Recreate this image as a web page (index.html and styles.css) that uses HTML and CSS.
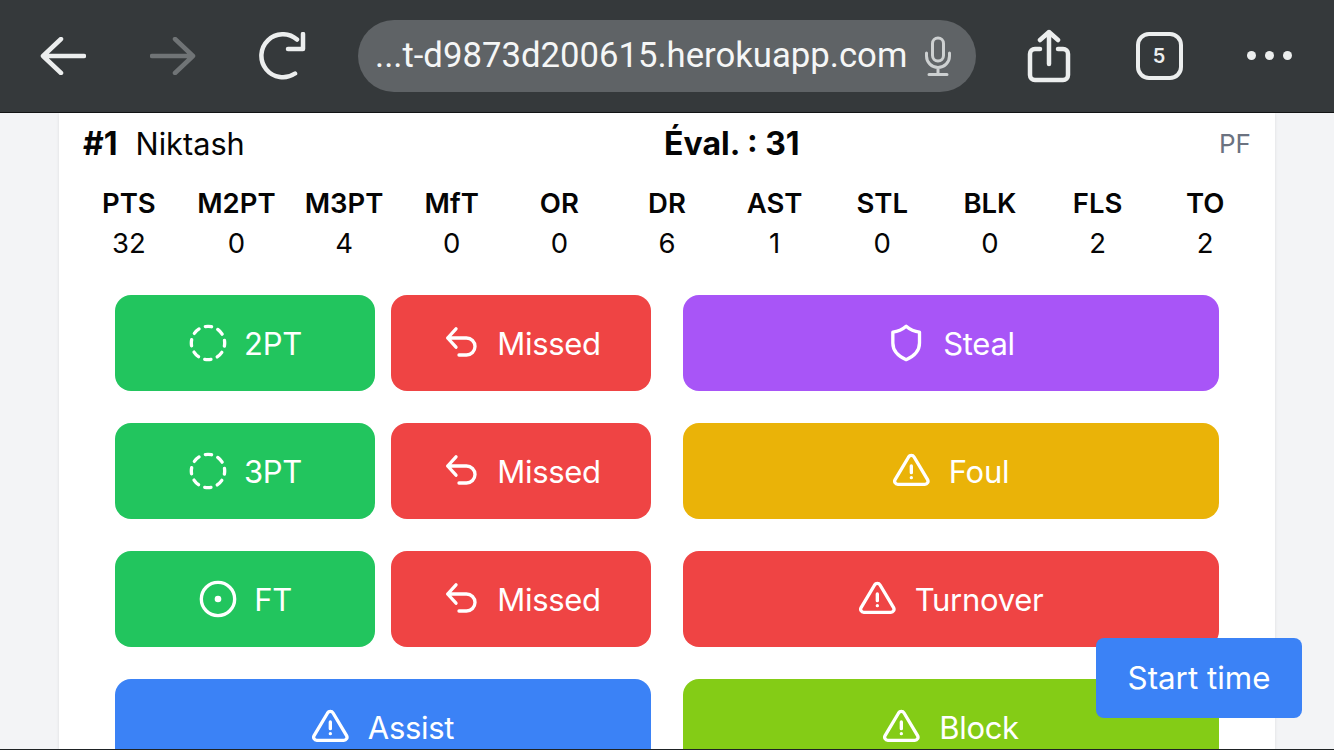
FILE: index.html
```html
<!DOCTYPE html>
<html lang="fr">
<head>
  <meta charset="UTF-8">
  <meta name="viewport" content="width=device-width, initial-scale=1.0">
  <title>Stats</title>
  <link rel="stylesheet" href="styles.css">
</head>
<body>
  <svg class="icon-defs" aria-hidden="true">
    <symbol id="i-dashed" viewBox="0 0 24 24">
      <circle class="dashed" cx="12" cy="12" r="10"/>
    </symbol>
    <symbol id="i-dot" viewBox="0 0 24 24">
      <circle cx="12" cy="12" r="10"/>
      <circle cx="12" cy="12" r="1"/>
    </symbol>
    <symbol id="i-back" viewBox="0 0 24 24">
      <path d="M9 3.500L4 9l5 5.500M4 9h11.300a5.100 5.100 0 0 1 0 10.200h-4.500"/>
    </symbol>
    <symbol id="i-shield" viewBox="0 0 24 24">
      <path d="M11.500 2C14 4.200 16.500 5.200 19.500 5.500V12C19.500 16.500 16.500 19.800 11.500 22C6.500 19.800 3.500 16.500 3.500 12V5.500C6.500 5.200 9 4.200 11.500 2z"/>
    </symbol>
    <symbol id="i-alert" viewBox="0 0 24 24">
      <path d="M11 9v4M11 16h.01M9.363 3.591l-8.106 13.534a1.914 1.914 0 0 0 1.636 2.871h16.214a1.914 1.914 0 0 0 1.636 -2.87l-8.106 -13.536a1.914 1.914 0 0 0 -3.274 0z"/>
    </symbol>
  </svg>

  <div class="browser-bar">
    <div class="bar-btn">
      <svg width="46" height="38" viewBox="0 0 46 38"><path d="M21 2L3 19l18 17M3 19h41"/></svg>
    </div>
    <div class="bar-btn bar-btn-off">
      <svg width="46" height="38" viewBox="0 0 46 38"><path d="M25 2l18 17-18 17M43 19H2"/></svg>
    </div>
    <div class="bar-btn">
      <svg width="50" height="48" viewBox="0 0 50 48"><path d="M39 7.500A21.500 21.500 0 1 0 37 41.500M30 17h15V2"/></svg>
    </div>
    <div class="url-pill">
      <span class="url-text">...t-d9873d200615.herokuapp.com</span>
      <svg class="mic" width="28" height="40" viewBox="0 0 28 40"><rect x="8.500" y="2" width="11" height="23" rx="5.500"/><path d="M2.500 17v3a11.500 11.500 0 0 0 23 0v-3M14 31.500V38M5 38.500h18"/></svg>
    </div>
    <div class="bar-btn">
      <svg width="44" height="54" viewBox="0 0 44 54"><path d="M13 20H8a5 5 0 0 0-5 5v21a5 5 0 0 0 5 5h28a5 5 0 0 0 5-5V25a5 5 0 0 0-5-5h-5M22 35V3M13 11l9-8 9 8"/></svg>
    </div>
    <div class="bar-btn">
      <div class="tab-count">5</div>
    </div>
    <div class="bar-btn">
      <div class="more-dots"><i></i><i></i><i></i></div>
    </div>
  </div>

  <div class="page">
    <div class="card">
      <div class="player-head">
        <div class="player-name"><b>#1</b><span>Niktash</span></div>
        <div class="player-eval">Éval. : 31</div>
        <div class="player-pos">PF</div>
      </div>

      <div class="stats">
        <div class="stat"><div class="stat-label">PTS</div><div>32</div></div>
        <div class="stat"><div class="stat-label">M2PT</div><div>0</div></div>
        <div class="stat"><div class="stat-label">M3PT</div><div>4</div></div>
        <div class="stat"><div class="stat-label">MfT</div><div>0</div></div>
        <div class="stat"><div class="stat-label">OR</div><div>0</div></div>
        <div class="stat"><div class="stat-label">DR</div><div>6</div></div>
        <div class="stat"><div class="stat-label">AST</div><div>1</div></div>
        <div class="stat"><div class="stat-label">STL</div><div>0</div></div>
        <div class="stat"><div class="stat-label">BLK</div><div>0</div></div>
        <div class="stat"><div class="stat-label">FLS</div><div>2</div></div>
        <div class="stat"><div class="stat-label">TO</div><div>2</div></div>
      </div>

      <div class="actions">
        <div class="pair">
          <button class="action green"><svg class="icon"><use href="#i-dashed"/></svg>2PT</button>
          <button class="action red"><svg class="icon"><use href="#i-back"/></svg>Missed</button>
        </div>
        <button class="action purple"><svg class="icon"><use href="#i-shield"/></svg>Steal</button>
        <div class="pair">
          <button class="action green"><svg class="icon"><use href="#i-dashed"/></svg>3PT</button>
          <button class="action red"><svg class="icon"><use href="#i-back"/></svg>Missed</button>
        </div>
        <button class="action yellow"><svg class="icon"><use href="#i-alert"/></svg>Foul</button>
        <div class="pair">
          <button class="action green"><svg class="icon"><use href="#i-dot"/></svg>FT</button>
          <button class="action red"><svg class="icon"><use href="#i-back"/></svg>Missed</button>
        </div>
        <button class="action red"><svg class="icon"><use href="#i-alert"/></svg>Turnover</button>
        <button class="action blue"><svg class="icon"><use href="#i-alert"/></svg>Assist</button>
        <button class="action lime"><svg class="icon"><use href="#i-alert"/></svg>Block</button>
      </div>
    </div>
  </div>

  <button class="start-time">Start time</button>
  <div class="bottom-edge"></div>
</body>
</html>
```

FILE: styles.css
```css
* {
  box-sizing: border-box;
}

html, body {
  height: 100%;
}

body {
  margin: 0;
  display: flex;
  flex-direction: column;
  overflow: hidden;
  font-family: Inter, "Liberation Sans", sans-serif;
  font-size: 28px;
  color: rgb(5, 5, 5);
  background: rgb(243, 244, 246);
}

.icon-defs {
  display: none;
}

/* browser chrome */
.browser-bar {
  flex: none;
  height: 113px;
  display: flex;
  align-items: center;
  padding: 0 10px 1px 8px;
  background: rgb(53, 57, 59);
  border-bottom: 1px solid rgb(18, 20, 21);
}

.bar-btn {
  flex: none;
  width: 110px;
  display: flex;
  justify-content: center;
  align-items: center;
}

.bar-btn svg {
  fill: none;
  stroke: rgb(236, 238, 238);
  stroke-width: 4.500;
  stroke-linecap: round;
  stroke-linejoin: round;
}

.bar-btn-off svg {
  stroke: rgb(112, 116, 118);
}

.url-pill {
  flex: 1;
  height: 72px;
  margin: 0 18px 0 20px;
  padding: 0 24px 0 17px;
  display: flex;
  align-items: center;
  justify-content: space-between;
  border-radius: 36px;
  background: rgb(95, 99, 102);
}

.url-text {
  padding-bottom: 2px;
  font-family: Roboto, "Liberation Sans", sans-serif;
  font-size: 34.700px;
  color: rgb(245, 246, 246);
  white-space: nowrap;
}

.mic {
  fill: none;
  stroke: rgb(205, 208, 209);
  stroke-width: 3;
  stroke-linecap: round;
}

.tab-count {
  width: 47px;
  height: 48px;
  display: flex;
  align-items: center;
  justify-content: center;
  border: 4px solid rgb(236, 238, 238);
  border-radius: 13px;
  font-size: 20px;
  font-weight: 600;
  color: rgb(236, 238, 238);
}

.more-dots {
  display: flex;
  gap: 9px;
}

.more-dots i {
  width: 9px;
  height: 9px;
  border-radius: 50%;
  background: rgb(236, 238, 238);
}

/* page */
.page {
  flex: 1;
  min-height: 0;
  padding: 0 59px;
}

.card {
  height: 100%;
  padding: 0 24px;
  background: white;
  box-shadow: 0 1px 3px rgba(0, 0, 0, 0.1);
}

.player-head {
  height: 60px;
  display: flex;
  justify-content: space-between;
  align-items: center;
  font-size: 30.700px;
}

.player-name {
  display: flex;
  align-items: baseline;
  gap: 18px;
}

.player-name b {
  font-size: 32px;
  font-weight: 700;
}

.player-eval {
  font-size: 32px;
  font-weight: 700;
}

.player-pos {
  font-size: 26px;
  color: rgb(107, 114, 128);
}

.stats {
  display: grid;
  grid-template-columns: repeat(11, 1fr);
  margin: 10px -8px 0;
  text-align: center;
  line-height: 40px;
  font-size: 27.500px;
}

.stat-label {
  font-weight: 600;
}

.actions {
  display: grid;
  grid-template-columns: 536px 536px;
  grid-auto-rows: 96px;
  gap: 32px;
  margin: 32px 32px 0;
}

.pair {
  display: grid;
  grid-template-columns: 1fr 1fr;
  gap: 16px;
}

.action {
  display: flex;
  align-items: center;
  justify-content: center;
  gap: 16px;
  border: none;
  border-radius: 16px;
  padding: 0;
  font-family: inherit;
  font-size: 31px;
  letter-spacing: -0.3px;
  color: white;
}

.icon {
  width: 40px;
  height: 40px;
  fill: none;
  stroke: white;
  stroke-width: 2;
  stroke-linecap: round;
  stroke-linejoin: round;
}

.dashed {
  stroke-dasharray: 3.850 4;
  stroke-dashoffset: 1.925;
}

.green { background: rgb(34, 197, 94); }
.red { background: rgb(239, 68, 68); }
.purple { background: rgb(168, 85, 247); }
.yellow { background: rgb(234, 179, 8); }
.blue { background: rgb(59, 130, 246); }
.lime { background: rgb(132, 204, 22); }

.start-time {
  position: fixed;
  right: 32px;
  bottom: 32px;
  width: 206px;
  height: 80px;
  border: none;
  border-radius: 8px;
  background: rgb(59, 130, 246);
  font-family: inherit;
  font-size: 31.300px;
  color: white;
}

.bottom-edge {
  position: fixed;
  left: 0;
  right: 0;
  bottom: 0;
  height: 1px;
  background: rgb(30, 34, 36);
}
```
